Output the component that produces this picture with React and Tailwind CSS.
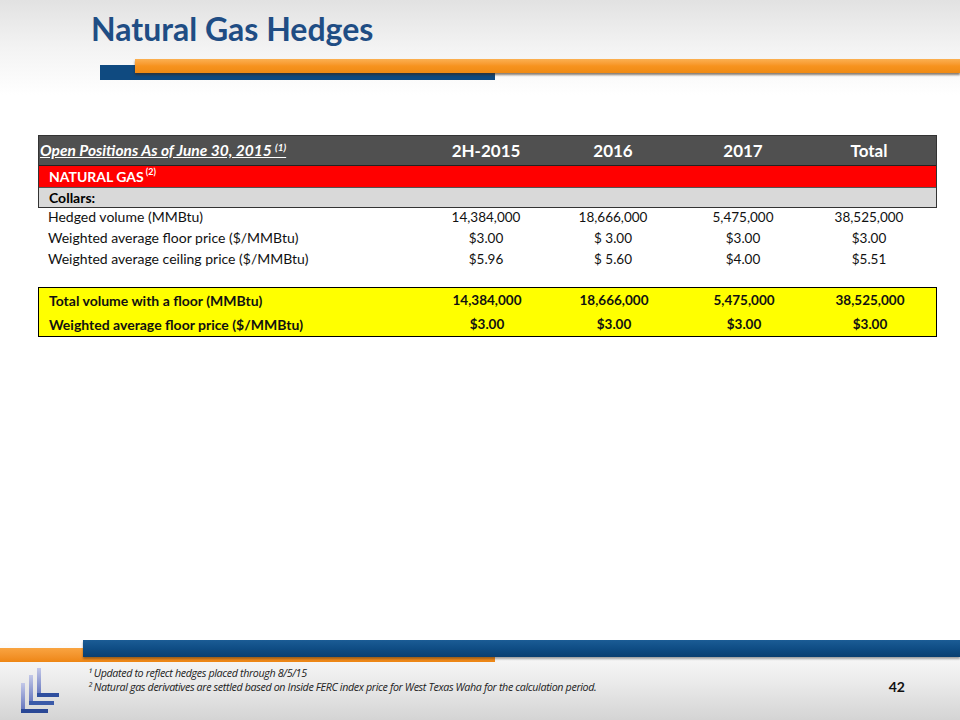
import React from 'react';

const rows = [
    { label: 'Hedged volume (MMBtu)', values: ['14,384,000', '18,666,000', '5,475,000', '38,525,000'] },
    { label: 'Weighted average floor price ($/MMBtu)', values: ['$3.00', '$ 3.00', '$3.00', '$3.00'] },
    { label: 'Weighted average ceiling price ($/MMBtu)', values: ['$5.96', '$ 5.60', '$4.00', '$5.51'] },
];

const totals = [
    { label: 'Total volume with a floor (MMBtu)', values: ['14,384,000', '18,666,000', '5,475,000', '38,525,000'] },
    { label: 'Weighted average floor price ($/MMBtu)', values: ['$3.00', '$3.00', '$3.00', '$3.00'] },
];

// label column + four value columns
const cols = 'grid grid-cols-[376px_124px_130px_130px_122px]';

const Logo = () => (
    <svg width="44" height="50" viewBox="0 0 44 50">
        <defs>
            <linearGradient id="lv" x1="0" y1="0" x2="0" y2="1">
                <stop offset="0" stopColor="#c3c8e8" />
                <stop offset="1" stopColor="#5d6fbb" />
            </linearGradient>
        </defs>
        <rect x="2" y="17" width="4" height="29" fill="url(#lv)" />
        <rect x="10" y="9" width="4" height="30" fill="url(#lv)" />
        <rect x="18" y="2" width="4" height="29" fill="url(#lv)" />
        <rect x="18" y="27" width="22" height="4" fill="#2f4f9e" />
        <rect x="10" y="35" width="25" height="4" fill="#3a5aa8" />
        <rect x="2" y="43" width="27" height="4" fill="#2a4896" />
    </svg>
);

export default function App() {
    return (
        <div className="w-[960px] h-[720px] bg-white flex flex-col overflow-hidden font-['Lato',sans-serif]">
            {/* Title band */}
            <div className="relative h-[95px] bg-gradient-to-b from-[#e2e2e2] via-[#f3f3f3] to-white">
                <h1 className="pl-[91px] pt-[10px] text-[32px] leading-[38px] font-bold text-[#1f4d84]">
                    Natural Gas Hedges
                </h1>
                <div className="absolute left-[100px] top-[65px] w-[395px] h-[15px] bg-[#0f4a80]" />
                <div className="absolute left-[135px] top-[59px] right-0 h-[14px] bg-gradient-to-b from-[#fbb050] via-[#f7931e] to-[#ef8a14] shadow-[0_2px_2px_rgba(60,40,20,0.6)]" />
            </div>

            {/* Table */}
            <div className="mt-[40px] ml-[38px] w-[899px] text-[14px]">
                <div className="border border-[#333]">
                    <div className={`${cols} pl-[9px] h-[29px] items-center bg-[#505050] text-white font-bold`}>
                        <div className="-ml-[8px] italic underline text-[15.5px] whitespace-nowrap">
                            Open Positions As of June 30, 2015 <sup className="text-[10px]">(1)</sup>
                        </div>
                        <div className="text-center text-[17px]">2H-2015</div>
                        <div className="text-center text-[17px]">2016</div>
                        <div className="text-center text-[17px]">2017</div>
                        <div className="text-center text-[17px]">Total</div>
                    </div>
                    <div className="h-[22px] flex items-center pl-[10px] bg-[#ff0000] text-white font-bold border-t border-[#222]">
                        NATURAL GAS <sup className="text-[9px] ml-[2px]">(2)</sup>
                    </div>
                    <div className="h-[20px] flex items-center pl-[10px] bg-[#d9d9d9] text-black font-bold border-t border-[#555]">
                        Collars:
                    </div>
                </div>
                <div className="pl-[10px] pt-[1px] text-[#111]">
                    {rows.map(row => (
                        <div key={row.label} className={`${cols} h-[21px] leading-[16px]`}>
                            <div>{row.label}</div>
                            {row.values.map((v, i) => (
                                <div key={i} className="text-center text-[13.5px]">{v}</div>
                            ))}
                        </div>
                    ))}
                </div>
                <div className="mt-[15px] border border-black bg-[#ffff00] pl-[10px] font-bold text-[#111]">
                    {totals.map(row => (
                        <div key={row.label} className={`${cols} h-[24px] items-center`}>
                            <div className="text-[14px]">{row.label}</div>
                            {row.values.map((v, i) => (
                                <div key={i} className="text-center text-[13.5px]">{v}</div>
                            ))}
                        </div>
                    ))}
                </div>
            </div>

            <div className="flex-1" />

            {/* Footer */}
            <div className="relative h-[80px] bg-gradient-to-b from-white via-[#ececec] to-[#d4d4d4]">
                <div className="absolute left-0 top-[8px] w-[495px] h-[14px] bg-gradient-to-b from-[#f9a440] to-[#ee8612]" />
                <div className="absolute left-[83px] right-0 top-0 h-[17px] bg-gradient-to-b from-[#1b5c95] via-[#0f4d85] to-[#0a3f70] shadow-[0_2px_2px_rgba(0,0,0,0.35)]" />
                <div className="flex pt-[26px] pl-[19px] pr-[55px]">
                    <Logo />
                    <div className="ml-[25px] text-[10.7px] leading-[14px] italic text-[#222] font-['Open_Sans',sans-serif] tracking-[-0.35px]">
                        <div>¹ Updated to reflect hedges placed through 8/5/15</div>
                        <div>² Natural gas derivatives are settled based on Inside FERC index price for West Texas Waha for the calculation period.</div>
                    </div>
                    <div className="ml-auto mt-[10px] text-[14px] font-bold text-[#111]">42</div>
                </div>
            </div>
        </div>
    );
}
